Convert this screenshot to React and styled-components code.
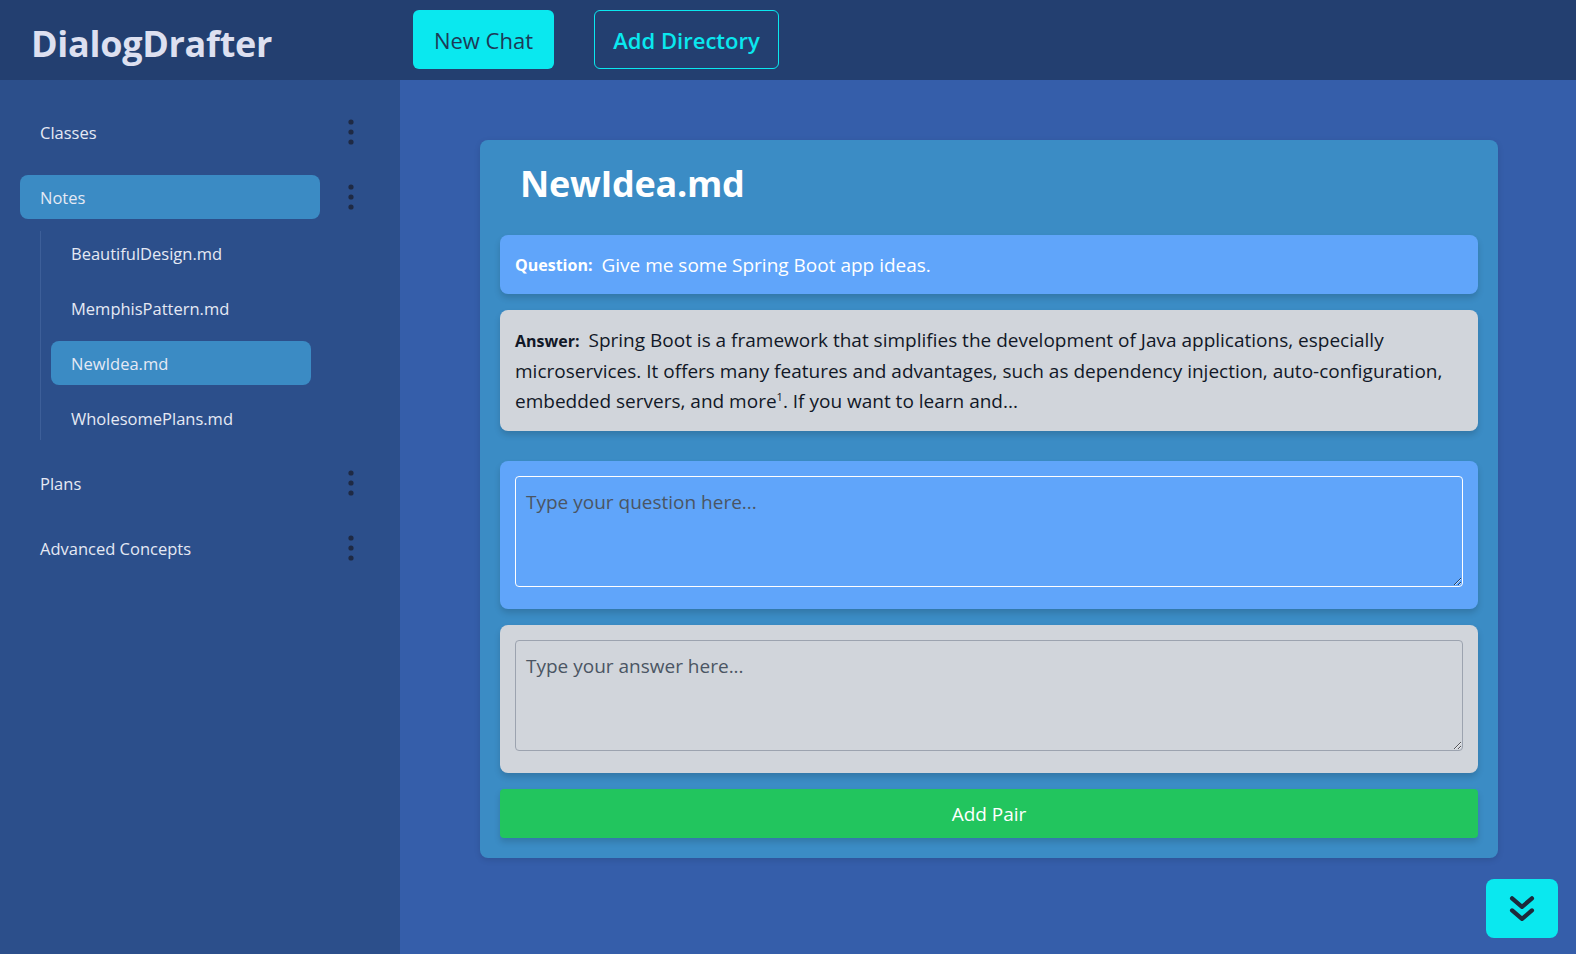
import React from 'react';
import styled, { createGlobalStyle } from 'styled-components';

const GlobalStyle = createGlobalStyle`
  html, body {
    margin: 0;
    padding: 0;
    height: 100%;
    overflow: hidden;
  }
  body {
    font-family: 'Open Sans', 'Noto Sans', sans-serif;
    background: #355eaa;
  }
  * {
    box-sizing: border-box;
  }
`;

const directories = [
  { name: 'Classes', files: [] },
  {
    name: 'Notes',
    active: true,
    files: ['BeautifulDesign.md', 'MemphisPattern.md', 'NewIdea.md', 'WholesomePlans.md'],
  },
  { name: 'Plans', files: [] },
  { name: 'Advanced Concepts', files: [] },
];

function Kebab() {
  return (
    <svg width="6" height="26" viewBox="0 0 6 26">
      <circle cx="3" cy="3" r="2.6" fill="#1f2a44" />
      <circle cx="3" cy="13" r="2.6" fill="#1f2a44" />
      <circle cx="3" cy="23" r="2.6" fill="#1f2a44" />
    </svg>
  );
}

function App() {
  return (
    <>
      <GlobalStyle />
      <Page>
        <Header>
          <Brand>DialogDrafter</Brand>
          <HeaderButtons>
            <SolidBtn>New Chat</SolidBtn>
            <OutlineBtn>Add Directory</OutlineBtn>
          </HeaderButtons>
        </Header>
        <Body>
          <Sidebar>
            {directories.map((dir) => (
              <DirGroup key={dir.name}>
                <DirRow>
                  <DirLabel active={dir.active}>{dir.name}</DirLabel>
                  <MenuBtn>
                    <Kebab />
                  </MenuBtn>
                </DirRow>
                {dir.files.length > 0 && (
                  <FileList>
                    {dir.files.map((file) => (
                      <FileItem key={file} active={file === 'NewIdea.md'}>
                        {file}
                      </FileItem>
                    ))}
                  </FileList>
                )}
              </DirGroup>
            ))}
          </Sidebar>
          <Main>
            <Card>
              <CardTitle>NewIdea.md</CardTitle>
              <Bubble variant="question">
                <Label>Question:</Label>
                Give me some Spring Boot app ideas.
              </Bubble>
              <Bubble variant="answer">
                <Label>Answer:</Label>
                Spring Boot is a framework that simplifies the development of Java applications,
                especially microservices. It offers many features and advantages, such as
                dependency injection, auto-configuration, embedded servers, and more
                <sup>1</sup>. If you want to learn and...
              </Bubble>
              <InputBox variant="question">
                <TextArea variant="question" placeholder="Type your question here..." />
              </InputBox>
              <InputBox variant="answer">
                <TextArea variant="answer" placeholder="Type your answer here..." />
              </InputBox>
              <AddPairBtn>Add Pair</AddPairBtn>
            </Card>
            <ScrollBtn>
              <svg width="34" height="34" viewBox="0 0 24 24" fill="none" stroke="#1e293b" strokeWidth="3" strokeLinecap="round" strokeLinejoin="round">
                <path d="M5 4.5l7 6 7-6" />
                <path d="M5 13l7 6 7-6" />
              </svg>
            </ScrollBtn>
          </Main>
        </Body>
      </Page>
    </>
  );
}

const Page = styled.div`
  height: 100vh;
  display: flex;
  flex-direction: column;
`;

const Header = styled.header`
  height: 80px;
  flex-shrink: 0;
  background: #233f70;
  display: flex;
  align-items: flex-start;
`;

const Brand = styled.h1`
  width: 413px;
  margin: 0;
  padding: 19px 0 0 31px;
  font-size: 36px;
  font-weight: 700;
  color: #dde0f0;
  letter-spacing: -0.3px;
`;

const HeaderButtons = styled.div`
  display: flex;
  gap: 40px;
  padding-top: 10px;
`;

const SolidBtn = styled.button`
  height: 59px;
  width: 141px;
  border: none;
  border-radius: 6px;
  background: #0ae8ef;
  color: #1d3a57;
  font-family: inherit;
  font-size: 22px;
`;

const OutlineBtn = styled.button`
  height: 59px;
  width: 185px;
  border: 1px solid #0ae8ef;
  border-radius: 6px;
  background: transparent;
  color: #0ae8ef;
  font-family: inherit;
  font-size: 22px;
  font-weight: 600;
`;

const Body = styled.div`
  flex: 1;
  display: flex;
  min-height: 0;
`;

const Sidebar = styled.aside`
  width: 400px;
  flex-shrink: 0;
  background: #2c4f8b;
  padding: 30px 0 0 20px;
  display: flex;
  flex-direction: column;
  gap: 21px;
`;

const DirGroup = styled.div`
  display: flex;
  flex-direction: column;
`;

const DirRow = styled.div`
  display: flex;
  align-items: center;
  gap: 21px;
`;

const DirLabel = styled.div`
  width: 300px;
  height: 44px;
  padding-left: 20px;
  display: flex;
  align-items: center;
  border-radius: 8px;
  font-size: 16.5px;
  color: #e5e9f4;
  background: ${(p) => (p.active ? '#3b8bc4' : 'transparent')};
`;

const MenuBtn = styled.div`
  display: flex;
  width: 20px;
  justify-content: center;
`;

const FileList = styled.div`
  margin: 12px 0 0 20px;
  border-left: 1px solid #3d5f99;
  display: flex;
  flex-direction: column;
  gap: 11px;
`;

const FileItem = styled.div`
  margin-left: 10px;
  width: 260px;
  height: 44px;
  padding-left: 20px;
  display: flex;
  align-items: center;
  border-radius: 8px;
  font-size: 16.5px;
  color: #e5e9f4;
  background: ${(p) => (p.active ? '#3b8bc4' : 'transparent')};
`;

const Main = styled.main`
  flex: 1;
  position: relative;
  padding: 60px 78px 0 80px;
`;

const Card = styled.section`
  background: #3b8cc5;
  border-radius: 8px;
  padding: 20px;
  display: flex;
  flex-direction: column;
  gap: 16px;
  box-shadow: 0 2px 6px rgba(0, 0, 0, 0.12);
`;

const CardTitle = styled.h2`
  margin: 0 0 0 20px;
  height: 59px;
  font-size: 36px;
  font-weight: 700;
  color: #ffffff;
  letter-spacing: -0.3px;
  line-height: 48px;
`;

const Bubble = styled.div`
  border-radius: 8px;
  padding: 15px;
  font-size: 19px;
  line-height: 30px;
  background: ${(p) => (p.variant === 'question' ? '#60a5fa' : '#d1d5db')};
  color: ${(p) => (p.variant === 'question' ? '#ffffff' : '#111827')};
  box-shadow: 0 4px 6px rgba(0, 0, 0, 0.15);
  ${(p) => p.variant === 'question' && 'height: 59px; display: flex; align-items: center;'}

  sup {
    font-size: 11px;
    line-height: 0;
  }
`;

const Label = styled.strong`
  font-size: 16px;
  font-weight: 700;
  margin-right: 9px;
`;

const InputBox = styled.div`
  margin-top: 14px;
  border-radius: 8px;
  padding: 15px 15px 22px;
  background: ${(p) => (p.variant === 'question' ? '#60a5fa' : '#d1d5db')};
  box-shadow: 0 4px 6px rgba(0, 0, 0, 0.15);

  & + & {
    margin-top: 0;
  }
`;

const TextArea = styled.textarea`
  display: block;
  width: 100%;
  height: 111px;
  resize: vertical;
  border-radius: 4px;
  padding: 12px 10px;
  font-family: inherit;
  font-size: 19px;
  background: transparent;
  border: 1px solid ${(p) => (p.variant === 'question' ? '#ffffff' : '#9ca3af')};
  outline: none;

  &::placeholder {
    color: #4b5563;
  }
`;

const AddPairBtn = styled.button`
  height: 49px;
  border: none;
  border-radius: 4px;
  background: #22c55e;
  color: #ffffff;
  font-family: inherit;
  font-size: 19px;
  box-shadow: 0 4px 6px rgba(0, 0, 0, 0.15);
`;

const ScrollBtn = styled.button`
  position: absolute;
  right: 18px;
  bottom: 16px;
  width: 72px;
  height: 59px;
  border: none;
  border-radius: 8px;
  background: #0ae8ef;
  display: flex;
  align-items: center;
  justify-content: center;
`;

export default App;
